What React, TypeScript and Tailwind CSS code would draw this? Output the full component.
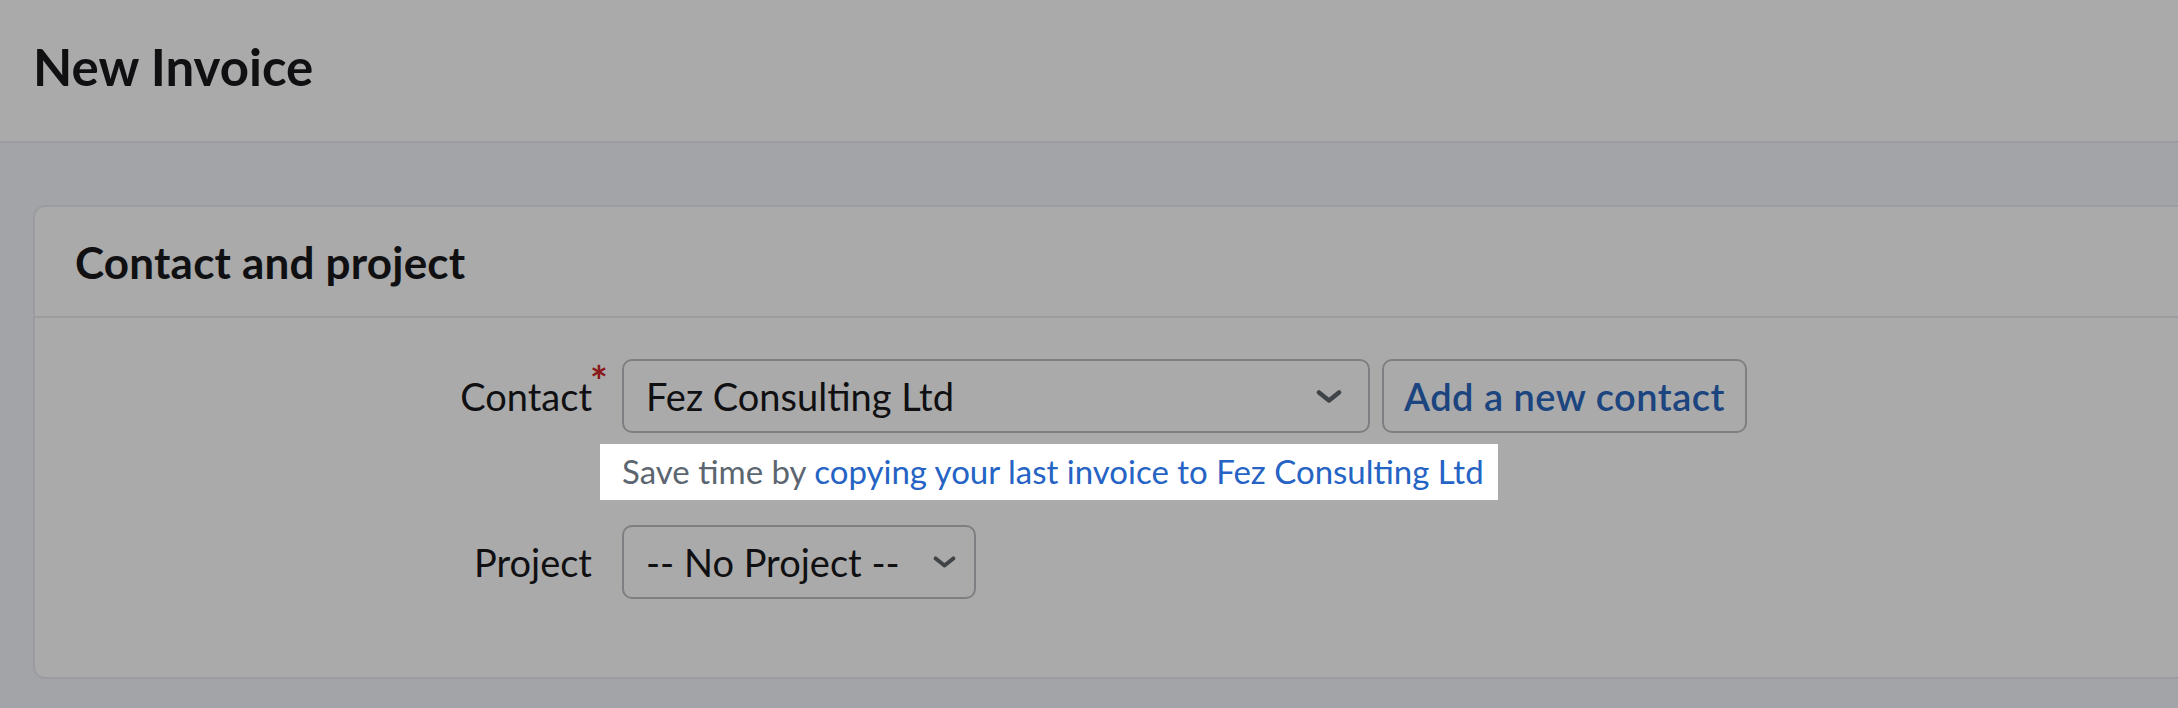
import React from 'react';

const Chevron: React.FC<{ className?: string }> = ({ className }) => (
  <svg viewBox="0 0 26 14" className={className} fill="none" stroke="currentColor" strokeWidth="4.5" strokeLinecap="round" strokeLinejoin="round">
    <path d="M3 3l10 8 10-8" />
  </svg>
);

export default function App() {
  return (
    <div className="relative min-h-screen overflow-hidden bg-[#f4f6fb] font-['Lato',sans-serif] text-[#18191c]">
      {/* Page header */}
      <header className="flex h-[143px] items-center border-b-2 border-[#e9ebf0] bg-white px-[33px] pb-[8px]">
        <h1 className="text-[51px] font-bold leading-none">New Invoice</h1>
      </header>

      <main className="pl-[33px] pt-[62px]">
        <section className="-mr-[40px] rounded-[12px] border-2 border-[#e9ebf0] bg-white">
          <div className="flex h-[111px] items-center border-b-2 border-[#e9ebf0] px-[40px]">
            <h2 className="text-[44px] font-bold leading-none tracking-[0.2px]">Contact and project</h2>
          </div>

          <div className="pb-[78px] pt-[41px]">
            {/* Contact row */}
            <div className="flex items-center">
              <label className="w-[587px] pr-[30px] text-right text-[38px] leading-none">
                <span className="relative">
                  Contact
                  <span className="absolute -left-[2px] -top-[13px] ml-[100%] text-[42px] font-bold leading-none text-[#d02727]">*</span>
                </span>
              </label>
              <div className="flex gap-[12px]">
                <button className="flex h-[74px] w-[748px] items-center justify-between rounded-[10px] border-2 border-[#bcbfc3] bg-white pl-[22px] pr-[26px] text-[38px]">
                  <span>Fez Consulting Ltd</span>
                  <Chevron className="h-[15px] w-[26px] text-[#5f666c]" />
                </button>
                <button className="h-[74px] rounded-[10px] border-2 border-[#bcbfc3] bg-white px-[20px] text-[38px] font-semibold tracking-[0.5px] text-[#2b66bf]">
                  Add a new contact
                </button>
              </div>
            </div>

            {/* Highlighted hint, shown above the tour overlay */}
            <div className="mt-[11px] pl-[565px]">
              <p className="relative z-20 inline-flex h-[56px] items-center bg-white pl-[22px] pr-[14px] text-[33px] text-[#5c6670]">
                Save time by&nbsp;
                <a href="#" className="text-[#2563c4]">copying your last invoice to Fez Consulting Ltd</a>
              </p>
            </div>

            {/* Project row */}
            <div className="mt-[25px] flex items-center">
              <label className="w-[587px] pr-[30px] text-right text-[38px] leading-none">Project</label>
              <button className="flex h-[74px] w-[354px] items-center justify-between rounded-[10px] border-2 border-[#bcbfc3] bg-white pl-[22px] pr-[18px] text-[38px]">
                <span>-- No Project --</span>
                <Chevron className="h-[14px] w-[23px] text-[#5f666c]" />
              </button>
            </div>
          </div>
        </section>
      </main>

      {/* Tour overlay */}
      <div className="fixed inset-0 z-10 bg-black/[0.333]" />
    </div>
  );
}
